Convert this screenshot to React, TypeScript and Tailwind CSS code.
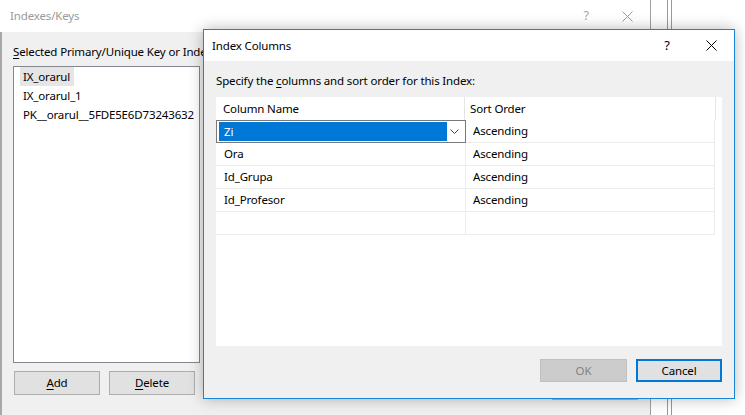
const FONT = { fontFamily: '"Noto Sans", "Open Sans", sans-serif' };

const keys = ["IX_orarul", "IX_orarul_1", "PK__orarul__5FDE5E6D73243632"];

const rows = [
  { name: "Zi", order: "Ascending" },
  { name: "Ora", order: "Ascending" },
  { name: "Id_Grupa", order: "Ascending" },
  { name: "Id_Profesor", order: "Ascending" },
];

function CloseIcon({ className }: { className?: string }) {
  return (
    <svg width="11" height="11" viewBox="0 0 11 11" className={className}>
      <path d="M0.5 0.5L10.5 10.5M10.5 0.5L0.5 10.5" stroke="currentColor" strokeWidth="1" />
    </svg>
  );
}

function Chevron() {
  return (
    <svg width="9" height="5" viewBox="0 0 9 5" className="text-[#444]">
      <path d="M0.5 0.5L4.5 4.5L8.5 0.5" fill="none" stroke="currentColor" strokeWidth="1" />
    </svg>
  );
}

function IndexColumnsDialog() {
  return (
    <div className="absolute left-[203px] top-[29px] w-[532px] h-[370px] border border-[#1883d7] bg-[#f0f0f0] shadow-[0_0_14px_rgba(0,0,0,0.28)] flex flex-col">
      {/* title bar */}
      <div className="h-[31px] bg-white flex items-center pl-[8px] text-black">
        <span>Index Columns</span>
        <span className="ml-auto w-[12px] text-center text-[13px]">?</span>
        <span className="ml-[33px] mr-[17px] flex">
          <CloseIcon className="text-black" />
        </span>
      </div>

      <div className="flex-1 px-[12px] pt-[12px] flex flex-col">
        <p className="leading-[16px] text-black">
          Specify the <span className="underline underline-offset-2">c</span>olumns and sort order for this Index:
        </p>

        {/* grid */}
        <div className="mt-[8px] w-[506px] h-[249px] bg-white flex flex-col">
          <div className="flex h-[23px] text-black w-[500px] border-r border-[#e5e5e5]">
            <div className="w-[249px] pl-[7px] flex items-center border-r border-[#e5e5e5]">Column Name</div>
            <div className="flex-1 pl-[5px] flex items-center">Sort Order</div>
          </div>
          <div className="w-[499px] border-r border-[#ececec]">
            {rows.map((r, i) => (
              <div key={r.name} className="flex h-[23px] border-b border-[#ececec] text-black">
                {i === 0 ? (
                  <div className="w-[250px] border border-[#7a7a7a] flex items-center pl-[2px] pr-[6px] -mb-px">
                    <div className="w-[228px] h-[19px] bg-[#0078d7] text-white pl-[5px] flex items-center">Zi</div>
                    <div className="ml-auto flex">
                      <Chevron />
                    </div>
                  </div>
                ) : (
                  <div className="w-[250px] pl-[8px] flex items-center border-r border-[#ececec]">{r.name}</div>
                )}
                <div className="flex-1 pl-[7px] flex items-center">{r.order}</div>
              </div>
            ))}
            <div className="flex h-[23px] border-b border-[#ececec]">
              <div className="w-[250px] border-r border-[#ececec]" />
            </div>
          </div>
        </div>

        {/* buttons */}
        <div className="mt-[13px] flex justify-end gap-[9px] w-[506px]">
          <button className="w-[87px] h-[23px] bg-[#cccccc] border border-[#bfbfbf] text-[#838383]">OK</button>
          <button className="w-[86px] h-[23px] bg-[#e1e1e1] border-2 border-[#0078d7] text-black">Cancel</button>
        </div>
      </div>
    </div>
  );
}

export default function App() {
  return (
    <div className="relative w-[745px] h-[415px] overflow-hidden bg-white text-[11.5px] tracking-[-0.15px]" style={FONT}>
      <div className="flex h-full">
        {/* back dialog */}
        <div className="w-[651px] h-full flex flex-col border-r border-[#a0a0a0]">
          <div className="h-[32px] bg-white flex items-center pl-[10px] text-[#9a9a9a]">
            <span>Indexes/Keys</span>
            <span className="ml-auto text-[13px] text-[#aaa]">?</span>
            <span className="ml-[33px] mr-[17px] flex">
              <CloseIcon className="text-[#9a9a9a]" />
            </span>
          </div>
          <div className="flex-1 bg-[#f0f0f0] border-l-2 border-[#a8a8a8] pl-[11px] pt-[12px] relative">
            <p className="leading-[16px] text-black whitespace-nowrap w-[190px] overflow-hidden">
              <span className="underline underline-offset-2">S</span>elected Primary/Unique Key or Index:
            </p>
            <div className="mt-[6px] w-[187px] h-[297px] bg-white border border-[#828790] pl-[6px]">
              {keys.map((k, i) => (
                <div key={k} className="h-[19px] flex items-center text-black">
                  <span className={i === 0 ? "bg-[#e5e5e5] pl-[3px] pr-[4px] py-[1px]" : "pl-[3px]"}>{k}</span>
                </div>
              ))}
            </div>
            <div className="mt-[8px] flex gap-[9px] pl-[1px]">
              <button className="w-[86px] h-[24px] bg-[#e1e1e1] border border-[#adadad] text-black">
                <span className="underline underline-offset-2">A</span>dd
              </button>
              <button className="w-[86px] h-[24px] bg-[#e1e1e1] border border-[#adadad] text-black">
                <span className="underline underline-offset-2">D</span>elete
              </button>
            </div>
            <div className="absolute left-[550px] top-[367px] w-[86px] h-[24px] border-t border-[#b5b5b5]" />
          </div>
        </div>
        {/* background window edges */}
        <div className="ml-[16px] w-[5px] h-full border-x border-[#9a9a9a]" />
      </div>
      <IndexColumnsDialog />
    </div>
  );
}
